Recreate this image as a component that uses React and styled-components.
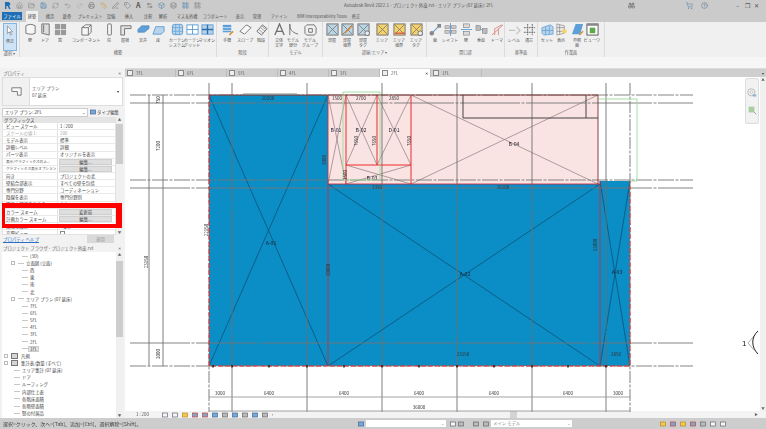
import React from 'react';
import styled, { createGlobalStyle } from 'styled-components';
import {
    Binoculars,
    Box,
    CircleHelp,
    FolderOpen,
    Home,
    Layers,
    LayoutGrid,
    PenLine,
    Printer,
    RefreshCw,
    Redo2,
    Ruler,
    Save,
    Settings2,
    ShoppingCart,
    Tag,
    Undo2,
} from 'lucide-react';

const GlobalStyle = createGlobalStyle`
    html, body {
        margin: 0;
        width: 766px;
        height: 429px;
        overflow: hidden;
        background: #fff;
    }
    #root {
        filter: blur(0.3px);
    }
    * {
        box-sizing: border-box;
    }
`;

const FONT = `"Noto Sans CJK JP", "Noto Sans", sans-serif`;

const Page = styled.div`
    width: 766px;
    height: 429px;
    display: flex;
    flex-direction: column;
    font-family: ${FONT};
    font-size: 4.4px;
    line-height: 1;
    color: #333;
    overflow: hidden;
`;

/* ---------- title bar ---------- */

const TitleBar = styled.div`
    height: 11px;
    flex: none;
    background: #cbcbcb;
    display: flex;
    align-items: center;
    padding-left: 4px;
`;

const QuickIcons = styled.div`
    display: flex;
    align-items: center;
    gap: 5px;
    width: 340px;
    font-size: 7px;
    font-weight: 700;
    color: #555;
`;

const TitleText = styled.div`
    width: 280px;
    font-size: 4.4px;
    color: #555;
    white-space: nowrap;
`;

const WindowIcons = styled.div`
    flex: 1;
    display: flex;
    align-items: center;
    color: #555;
    font-size: 6px;
`;

const WindowIcon = styled.span`
    margin-left: ${p => p.$ml}px;
    display: flex;
`;

const MenuTabs = styled.div`
    height: 11px;
    flex: none;
    background: #cbcbcb;
    display: flex;
    align-items: stretch;
    padding-left: 2px;
`;

const FileTab = styled.div`
    width: 20px;
    background: #1f6fb5;
    color: #fff;
    display: flex;
    align-items: center;
    justify-content: center;
    height: 8px;
    margin-top: 1px;
`;

const MenuTab = styled.div`
    width: 12px;
    flex: none;
    display: flex;
    align-items: center;
    justify-content: center;
    white-space: nowrap;
    margin-left: ${p => p.$ml}px;
    background: ${p => (p.$active ? '#f0f0f0' : 'transparent')};
    color: #555;
    font-size: 4.2px;
`;

/* ---------- ribbon ---------- */

const Ribbon = styled.div`
    height: 35px;
    flex: none;
    background: #f0f0f0;
    display: flex;
`;

const RibbonGroup = styled.div`
    width: ${p => p.$w}px;
    flex: none;
    border-right: 1px solid #dcdcdc;
    display: flex;
    flex-direction: column;
`;

const ToolRow = styled.div`
    flex: 1;
    display: flex;
    padding-top: 1px;
`;

const Tool = styled.div`
    width: 14px;
    flex: none;
    margin-left: ${p => p.$ml}px;
    display: flex;
    flex-direction: column;
    align-items: center;
    gap: 2px;
    white-space: nowrap;
    color: #555;
    font-size: 4.1px;
    line-height: 5.4px;
    text-align: center;
`;

const ActiveTool = styled(Tool)`
    background: #cfe3f6;
    border: 1px solid #84b5e0;
    height: 28px;
    padding-top: 1px;
`;

const GroupLabel = styled.div`
    height: 6px;
    margin-bottom: 1px;
    text-align: center;
    color: #666;
    font-size: 4.2px;
`;

const RibbonStrip = styled.div`
    height: 11px;
    flex: none;
    background: #f6f6f6;
`;

/* ---------- main area ---------- */

const Main = styled.div`
    flex: 1;
    min-height: 0;
    display: flex;
`;

const Sidebar = styled.aside`
    position: relative;
    width: 125px;
    flex: none;
    background: #f2f2f2;
    display: flex;
    flex-direction: column;
    padding: 2px 2px 0;
`;

const PanelHeader = styled.div`
    height: 7px;
    flex: none;
    display: flex;
    align-items: center;
    justify-content: space-between;
    color: #666;
    padding: 0 2px 0 1px;
`;

const TypeBox = styled.div`
    height: 29px;
    flex: none;
    background: #fff;
    border: 1px solid #ddd;
    display: flex;
    align-items: center;
    padding-right: 3px;
`;

const TypeThumb = styled.div`
    width: 27px;
    height: 100%;
    background: #f1f1f1;
    border-right: 1px solid #ddd;
    display: flex;
    align-items: center;
    justify-content: center;
`;

const TypeName = styled.div`
    flex: 1;
    padding-left: 2px;
    line-height: 7px;
    color: #555;
`;

const SelectorRow = styled.div`
    height: 10px;
    flex: none;
    display: flex;
    align-items: center;
    gap: 2px;
    margin-top: 1px;
`;

const SelectorBox = styled.div`
    width: 86px;
    height: 9px;
    background: #fff;
    border: 1px solid #ccc;
    display: flex;
    align-items: center;
    justify-content: space-between;
    padding: 0 2px;
`;

const TypeEdit = styled.div`
    display: flex;
    align-items: center;
    gap: 1px;
    color: #444;
    white-space: nowrap;
`;

const PropArea = styled.div`
    height: 118px;
    flex: none;
    display: flex;
    background: #fff;
    overflow: hidden;
`;

const PropTable = styled.div`
    flex: 1;
    border: 1px solid #e2e2e2;
    border-top: 0;
    overflow: hidden;
`;

const SectionRow = styled.div`
    height: 6px;
    background: #e4e4e4;
    display: flex;
    align-items: center;
    padding-left: 1px;
`;

const PropRow = styled.div`
    height: 7.15px;
    display: grid;
    grid-template-columns: 55px 1fr;
    border-bottom: 1px solid #eaeaea;
`;

const PropName = styled.div`
    padding-left: 3px;
    border-right: 1px solid #e2e2e2;
    white-space: nowrap;
    display: flex;
    align-items: center;
    font-size: ${p => (p.$long ? 3.6 : 4.4)}px;
    color: ${p => (p.$muted ? '#aaa' : '#444')};
`;

const PropValue = styled.div`
    padding-left: 2px;
    white-space: nowrap;
    display: flex;
    align-items: center;
    color: ${p => (p.$muted ? '#aaa' : '#444')};
`;

const PropButton = styled.div`
    margin: 0 1px;
    width: 53px;
    background: #dedede;
    border: 1px solid #cfcfcf;
    display: flex;
    align-items: center;
    justify-content: center;
    color: #444;
`;

const CheckBox = styled.span`
    width: 5px;
    height: 5px;
    background: #fff;
    border: 1px solid #888;
`;

const ScrollV = styled.div`
    width: ${p => p.$w || 7}px;
    flex: none;
    background: #f0f0f0;
    display: flex;
    flex-direction: column;
    align-items: center;
    justify-content: space-between;
    color: #666;
    font-size: 3.5px;
    padding: 1px 0;
`;

const ScrollThumb = styled.div`
    width: 100%;
    height: ${p => p.$h}px;
    margin-top: ${p => p.$top}px;
    margin-bottom: auto;
    background: #cdcdcd;
`;

const HelpRow = styled.div`
    height: 8px;
    flex: none;
    display: flex;
    align-items: center;
    justify-content: space-between;
    padding: 0 9px 0 1px;
`;

const HelpLink = styled.span`
    color: #2a6fc4;
    text-decoration: underline;
`;

const ApplyButton = styled.div`
    width: 27px;
    height: 8px;
    background: #d9d9d9;
    color: #999;
    display: flex;
    align-items: center;
    justify-content: center;
`;

const TreeHeader = styled(PanelHeader)`
    margin-top: 2px;
`;

const TreeArea = styled.div`
    flex: 1;
    min-height: 0;
    display: flex;
    background: #fff;
    overflow: hidden;
`;

const Tree = styled.div`
    flex: 1;
    padding-top: 0.5px;
    overflow: hidden;
`;

const TreeRow = styled.div`
    height: 7.15px;
    display: flex;
    align-items: center;
    gap: 1px;
    padding-left: ${p => p.$indent}px;
    white-space: nowrap;
    color: #444;
`;

const TreeText = styled.span`
    padding: 0 1px;
    background: ${p => (p.$selected ? '#e6e6e6' : 'transparent')};
    outline: ${p => (p.$selected ? '1px solid #ccc' : 'none')};
`;

const TreeLine = styled.span`
    width: 6px;
    height: 1px;
    background: #c8c8c8;
    flex: none;
`;

const Expander = styled.span`
    width: 4px;
    height: 4px;
    border: 1px solid #bbb;
    margin-right: 2px;
    flex: none;
`;

const TreeGlyph = styled.span`
    width: 7px;
    height: 6px;
    background: #d5d5d5;
    border: 1px solid #777;
    margin-right: 1px;
    flex: none;
`;

const RedFrame = styled.div`
    position: absolute;
    left: 2px;
    top: 135px;
    width: 120px;
    height: 25px;
    border: solid #ff0000;
    border-width: 5px 6px 4px 3px;
    pointer-events: none;
`;

const ViewArea = styled.section`
    flex: 1;
    min-width: 0;
    display: flex;
    flex-direction: column;
`;

const ViewTabs = styled.div`
    height: 9px;
    flex: none;
    background: #cfcfcf;
    display: flex;
    border-top: 1px solid #dcdcdc;
`;

const ViewTab = styled.div`
    width: 51px;
    flex: none;
    display: flex;
    align-items: center;
    gap: 3px;
    padding-left: 2px;
    color: #666;
    background: ${p => (p.$active ? '#fff' : 'transparent')};
    border-right: 1px solid #bdbdbd;
    position: relative;
`;

const TabClose = styled.span`
    position: absolute;
    right: 2px;
    color: #333;
`;

const TabSheet = styled.span`
    width: 6px;
    height: 6px;
    border: 1px solid #888;
    background: #eee;
`;

const TabMenu = styled.span`
    margin-left: auto;
    margin-right: 2px;
    align-self: center;
    color: #444;
    font-size: 4px;
`;

const CanvasRow = styled.div`
    flex: 1;
    min-height: 0;
    display: flex;
`;

const Canvas = styled.div`
    position: relative;
    flex: 1;
    background: #fff;
`;

const PlanSvg = styled.svg`
    display: block;
    width: 635px;
    height: 335px;
`;

const NavWheel = styled.div`
    position: absolute;
    top: 1px;
    right: 1px;
    width: 14px;
    height: 46px;
    background: #f2f2f2;
    border: 1px solid #ddd;
    border-radius: 2px;
    display: flex;
    flex-direction: column;
    align-items: center;
    justify-content: center;
    gap: 8px;
`;

const ViewBar = styled.div`
    height: 7px;
    flex: none;
    display: flex;
    align-items: center;
    background: #f3f3f3;
`;

const ScaleText = styled.span`
    margin-left: 11px;
    width: 26px;
    color: #555;
`;

const BarIcons = styled.div`
    display: flex;
    align-items: center;
    gap: 4px;
    width: 119px;
`;

const HScroll = styled.div`
    flex: 1;
    height: 100%;
    display: flex;
    align-items: center;
    padding-left: 229px;
`;

const HThumb = styled.span`
    width: 7px;
    height: 100%;
    background: #d3d3d3;
`;

const HArrow = styled.span`
    margin-left: auto;
    margin-right: 8px;
    color: #666;
    font-size: 3.5px;
`;

/* ---------- status bar ---------- */

const StatusBar = styled.footer`
    height: 11px;
    flex: none;
    background: #cdcdcd;
    display: flex;
    align-items: center;
    color: #444;
`;

const StatusText = styled.div`
    width: 358px;
    padding-left: 3px;
    white-space: nowrap;
    font-size: 5px;
`;

const StatusInput = styled.div`
    width: ${p => p.$w}px;
    height: 7px;
    background: #fff;
    margin-left: ${p => p.$ml}px;
    color: #888;
    display: flex;
    align-items: center;
    justify-content: space-between;
    padding: 0 2px;
    flex: none;
`;

const StatusIcons = styled.div`
    display: flex;
    align-items: center;
    gap: ${p => p.$gap}px;
    margin-left: ${p => p.$ml}px;
`;

/* ---------- little drawings ---------- */

const Ico = styled.svg`
    display: block;
    flex: none;
    width: ${p => p.$s || 13}px;
    height: ${p => p.$s || 13}px;
`;

const G = '#707070';
const B = '#5d9fd6';
const L = '#b9d3ea';
const Y = '#f4d26b';

const roomIcon = (fill, extra) => (
    <>
        <rect x="1" y="1" width="12" height="12" fill={fill} stroke={G} />
        <path d="M2 2l10 10M12 2L2 12" stroke={G} strokeWidth=".8" />
        {extra}
    </>
);

const ICONS = {
    arrow: <path d="M4 1v9l2-2 2 4 1-1-2-3h3z" fill="#fff" stroke={G} strokeWidth=".7" />,
    wall: <path d="M2 3c3-2 7-2 10 0v8c-3 2-7 1-10 0z" fill="#f6f6f6" stroke={G} />,
    door: <path d="M3 1h8v12l-8-2zM5 2v8" fill="#ddd" stroke={G} />,
    window: (
        <>
            <rect x="1" y="1" width="12" height="12" fill="#999" />
            <path d="M7 1v12M1 7h12" stroke="#ddd" />
        </>
    ),
    component: <path d="M2 5l4-3h6v8l-3 3H2zM2 5h7v8M9 5l3-3" fill="#f6f6f6" stroke={G} />,
    column: <rect x="5" y="1" width="4" height="12" rx="1" fill="#f6f6f6" stroke={G} />,
    roof: <path d="M2 13V3h11v3H6v7z" fill="#e4e4e4" stroke={G} />,
    ceiling: <path d="M1 7l4-4h8v3l-5 4H1z" fill={B} stroke="#3d7cb0" strokeWidth=".6" />,
    floor: <path d="M1 12l3-8h9v5l-3 3z" fill={L} stroke={B} />,
    curtain: (
        <>
            <rect x="1.5" y="1.5" width="11" height="11" rx="2" fill={L} stroke={B} />
            <path d="M5 1v12M9 1v12M1 5h12M1 9h12" stroke={B} strokeWidth=".7" />
        </>
    ),
    grid: (
        <>
            <rect x="1" y="2" width="12" height="10" fill="#fff" stroke={B} />
            <path d="M7 2v10M1 7h12" stroke={B} />
        </>
    ),
    mullion: (
        <>
            <rect x="1" y="2" width="12" height="10" fill={L} stroke={B} />
            <path d="M7 2v10M1 7h12" stroke="#2f6fa8" strokeWidth="1.5" />
        </>
    ),
    railing: (
        <>
            <rect x="2" y="2" width="9" height="8" fill={B} />
            <path d="M2 5h9M2 8h9" stroke="#fff" strokeWidth=".7" />
            <path d="M9 13l4-4" stroke="#d8902e" strokeWidth="1.6" />
        </>
    ),
    ramp: <path d="M1 9l7-7 5 3-7 7z" fill="#fafafa" stroke={G} />,
    stair: (
        <>
            <path d="M2 9l6-7 5 4-6 7z" fill="#eee" stroke={G} />
            <path d="M4 7l5 4M6 5l5 4M7 3l5 4" stroke={G} strokeWidth=".6" />
        </>
    ),
    text3d: <path d="M2 13L7 1l5 12M4 9h6" fill="none" stroke={G} strokeWidth="1.4" />,
    line: <path d="M3 1c0 6 2 9 9 11M3 1v12" fill="none" stroke={G} />,
    group: <path d="M3 2h8l2 3v6l-2 2H3l-2-2V4zM5 6h4v4H5z" fill="none" stroke={G} />,
    room: roomIcon('#bcd5e4'),
    roomBound: roomIcon('#bcd5e4', <path d="M4 11l8-8" stroke="#e08a2e" strokeWidth="1.4" />),
    roomTag: roomIcon('#bcd5e4', <circle cx="11" cy="11" r="2.5" fill="#eee" stroke={G} />),
    area: roomIcon(Y),
    areaBound: roomIcon(Y, <path d="M2 11h11" stroke="#d8564b" strokeWidth="1.4" />),
    areaTag: roomIcon(Y, <circle cx="11" cy="11" r="2.5" fill="#eee" stroke={G} />),
    face: (
        <>
            <path d="M2 12l9-9" stroke={B} strokeWidth="1.2" />
            <circle cx="3" cy="11" r="2.4" fill="#888" />
            <rect x="9" y="1" width="4" height="4" fill="#888" />
        </>
    ),
    shaft: (
        <>
            <path d="M7 0v14" stroke={B} />
            <rect x="1" y="3" width="5" height="3" fill="#ccc" stroke={G} strokeWidth=".5" />
            <rect x="8" y="3" width="5" height="3" fill="#ccc" stroke={G} strokeWidth=".5" />
            <rect x="1" y="8" width="5" height="3" fill="#ccc" stroke={G} strokeWidth=".5" />
            <rect x="8" y="8" width="5" height="3" fill="#ccc" stroke={G} strokeWidth=".5" />
        </>
    ),
    wallOpen: (
        <>
            <path d="M1 7h12" stroke={B} />
            <rect x="4" y="1" width="6" height="4" fill="#ddd" stroke={G} strokeWidth=".6" />
            <rect x="4" y="9" width="6" height="4" fill="#ddd" stroke={G} strokeWidth=".6" />
        </>
    ),
    vertical: (
        <>
            <path d="M2 2l10 10" stroke={B} />
            <rect x="1" y="3" width="5" height="5" fill="#bbb" stroke={G} strokeWidth=".5" />
            <rect x="8" y="6" width="5" height="5" fill="#bbb" stroke={G} strokeWidth=".5" />
        </>
    ),
    dormer: <path d="M1 13L13 2M4 13V6l8-4M8 13V6" fill="none" stroke="#d98a80" />,
    level: <path d="M1 8h7M9 4l4 4-4 4" fill="none" stroke="#c4c4c4" strokeWidth="1.3" />,
    axes: <path d="M1 5h12M1 10h12M5 1v12M10 1v12" stroke="#666" strokeDasharray="2 .7" />,
    set: <path d="M1 5l9-3 3 2v8l-10 1-2-2z M5 4v9M9 3v9M1 8h12" fill={L} stroke={B} strokeWidth=".8" />,
    show: (
        <>
            <path d="M2 1l8 2v8l-8 2zM5 2v10M2 5h8M2 9h8" fill="#eee" stroke={G} strokeWidth=".6" />
            <circle cx="10" cy="9" r="2.5" fill={Y} />
        </>
    ),
    plane: (
        <>
            <path d="M5 1h8l-3 11H1z" fill={B} />
            <path d="M9 13l4-4" stroke="#d8902e" strokeWidth="1.5" />
        </>
    ),
    viewer: (
        <>
            <rect x="1" y="1" width="12" height="12" fill="#fff" stroke="#555" />
            <rect x="1" y="1" width="12" height="2" fill="#888" />
            <rect x="4" y="5" width="6" height="6" fill="#5ea84a" />
        </>
    ),
};

const makeIcon = (name, s) => (
    <Ico $s={s} viewBox="0 0 14 14">
        {ICONS[name]}
    </Ico>
);

const SmallIcon = ({ kind }) => {
    const colors = {
        box: ['#f5f5f5', '#667'],
        blue: ['#78a8d6', '#3d6b98'],
        red: ['#7ba6cf', '#c9423c'],
        yellow: ['#f1c84d', '#b78a25'],
        green: ['#9bc48a', '#5f8d4f'],
        gray: ['#bbb', '#666'],
    };
    const [fill, stroke] = colors[kind];
    return (
        <Ico $s={6} viewBox="0 0 6 6">
            <rect x=".5" y="1" width="5" height="4" fill={fill} stroke={stroke} strokeWidth=".7" />
        </Ico>
    );
};

/* ---------- data ---------- */

const QUICK_LEFT = [
    [Home, '#777'], [FolderOpen, '#777'], [Save, '#2f6fa8'], [RefreshCw, '#888'], [Undo2, '#888'],
    [Redo2, '#aaa'], [Printer, '#666'], [Ruler, '#c99a2e'], [PenLine, '#666'], [Tag, '#666'],
];
const QUICK_RIGHT = [
    [Settings2, '#666'], [Box, '#3d7cb0'], [Layers, '#666'], [LayoutGrid, '#3d7cb0'], [LayoutGrid, '#777'],
];

const MENU = [
    ['建築', 32, true], ['構造', 50], ['鉄骨', 67], ['プレキャスト', 90], ['設備', 111], ['挿入', 129],
    ['注釈', 148], ['解析', 163], ['マス＆外構', 187], ['コラボレート', 215], ['表示', 240], ['管理', 257],
    ['アドイン', 279], ['BIM Interoperability Tools', 322], ['修正', 356],
];

const GROUPS = [
    { label: '構築', start: 20, end: 217, tools: [
        ['wall', '壁', 30], ['door', 'ドア', 45], ['window', '窓', 60], ['component', 'コンポーネント', 86],
        ['column', '柱', 109], ['roof', '屋根', 125], ['ceiling', '天井', 143], ['floor', '床', 158],
        ['curtain', ['カーテン', 'システム'], 177], ['grid', ['カーテン', 'グリッド'], 192], ['mullion', 'マリオン', 207],
    ] },
    { label: '階段', start: 217, end: 269, tools: [
        ['railing', '手摺', 227], ['ramp', 'スロープ', 245], ['stair', '階段', 261],
    ] },
    { label: 'モデル', start: 269, end: 323, tools: [
        ['text3d', ['立体', '文字'], 279], ['line', ['モデル', '線分'], 293], ['group', ['モデル', 'グループ'], 310],
    ] },
    { label: '部屋/エリア ▾', start: 323, end: 427, tools: [
        ['room', '部屋', 332], ['roomBound', ['部屋', '境界'], 347], ['roomTag', ['部屋', 'タグ'], 363],
        ['area', 'エリア', 382], ['areaBound', ['エリア', '境界'], 399], ['areaTag', ['エリア', 'タグ'], 416],
    ] },
    { label: '開口部', start: 427, end: 505, tools: [
        ['face', '面', 435], ['shaft', 'シャフト', 450], ['wallOpen', '壁', 466], ['vertical', '垂直', 481], ['dormer', 'ドーマ', 497],
    ] },
    { label: '基準面', start: 505, end: 538, tools: [
        ['level', 'レベル', 514], ['axes', '通芯', 529],
    ] },
    { label: '作業面', start: 538, end: 605, tools: [
        ['set', 'セット', 547], ['show', '表示', 561], ['plane', ['参照', '面'], 577], ['viewer', 'ビューワ', 592],
    ] },
];

const PROPS = [
    ['ビュー スケール', '1 : 200'],
    ['スケールの値 1:', '200', 'muted'],
    ['モデル表示', '標準'],
    ['詳細レベル', '詳細'],
    ['パーツ表示', 'オリジナルを表示'],
    ['表示/グラフィックスの上...', '編集...', 'button'],
    ['グラフィックス表示オプション', '編集...', 'button'],
    ['向き', 'プロジェクトの北'],
    ['壁結合部表示', 'すべての壁を包括'],
    ['専門分野', 'コーディネーション'],
    ['隠線を表示', '専門分野別'],
    ['既定の解析表示スタイル', 'なし'],
    ['カラー スキーム', '変更前', 'button'],
    ['計画カラー スキーム', '編集...', 'button'],
    ['太陽の設定', '<なし>'],
    ['文脈ビュー', '', 'check'],
];

const TREE = [
    { text: '(3D)', indent: 20, line: true },
    { text: '立面図 (立面)', indent: 9, exp: true },
    { text: '西', indent: 20, line: true },
    { text: '東', indent: 20, line: true },
    { text: '南', indent: 20, line: true },
    { text: '北', indent: 20, line: true },
    { text: 'エリア プラン (07 延床)', indent: 9, exp: true },
    { text: '7FL', indent: 20, line: true },
    { text: '6FL', indent: 20, line: true },
    { text: '5FL', indent: 20, line: true },
    { text: '4FL', indent: 20, line: true },
    { text: '3FL', indent: 20, line: true },
    { text: '2FL', indent: 20, line: true },
    { text: '1FL', indent: 20, line: true, selected: true },
    { text: '凡例', indent: 2, exp: true, glyph: true },
    { text: '集計表/数量 (すべて)', indent: 2, exp: true, glyph: true },
    { text: 'エリア集計 (07 延床)', indent: 12, line: true },
    { text: 'ドア', indent: 12, line: true },
    { text: 'ルーフィング', indent: 12, line: true },
    { text: '内部仕上表', indent: 12, line: true },
    { text: '各階床面積', indent: 12, line: true },
    { text: '各階壁面積', indent: 12, line: true },
    { text: '竪の付属品', indent: 12, line: true },
];

const VIEW_TABS = ['7FL', '6FL', '5FL', '4FL', '3FL', '2FL', '1FL'];

/* grid columns and levels of the plan, in page pixels */
const GRID_X = [232, 307, 382, 457, 532, 606];
const TICK_X = [213, 232, 269, 307, 344, 382, 419, 457, 494, 532, 568, 606];
const LEFT_X = 209;
const RIGHT_X = 630;

const PLAN_AREAS = [
    { x: 209, y: 95, w: 119, h: 271, fill: '#0b8dc6', label: 'A-01', lx: 271, ly: 245 },
    { x: 328, y: 184, w: 272, h: 182, fill: '#0b8dc6', label: 'A-02', lx: 465, ly: 276 },
    { x: 600, y: 181, w: 30, h: 185, fill: '#0b8dc6', label: 'A-03', lx: 617, ly: 274 },
    { x: 328, y: 95, w: 18, h: 89, fill: '#fae3e3', label: 'B-01', lx: 336, ly: 132 },
    { x: 346, y: 95, w: 31, h: 70, fill: '#fae3e3', label: 'B-02', lx: 361, ly: 132 },
    { x: 377, y: 95, w: 34, h: 70, fill: '#fae3e3', label: 'D-01', lx: 394, ly: 132 },
    { x: 346, y: 165, w: 65, h: 19, fill: '#fae3e3', label: 'B-03', lx: 372, ly: 180 },
    { x: 411, y: 95, w: 187, h: 89, fill: '#fae3e3', label: 'B-04', lx: 514, ly: 146 },
];

const DIMS = [
    ['10200', 268, 100], ['1500', 337, 100], ['2700', 361, 100], ['2850', 394, 100],
    ['3350', 377, 189], ['16100', 503, 189], ['23150', 463, 356], ['2850', 616, 356],
    ['3000', 220, 395], ['6400', 269, 395], ['6400', 344, 395], ['6400', 419, 395],
    ['6400', 494, 395], ['6400', 568, 395], ['3000', 618, 395], ['36000', 419, 409],
];

const V_DIMS = [
    ['750', 160, 100], ['7200', 160, 146], ['23150', 148, 262], ['3000', 160, 354],
    ['22150', 208, 230], ['3000', 326, 160], ['20000', 330, 270], ['13000', 597, 245],
    ['7650', 358, 141], ['7650', 376, 141], ['7650', 411, 141], ['1500', 347, 175],
];

const Plan = () => (
    <PlanSvg viewBox="125 77 635 335">
        {PLAN_AREAS.map(a => (
            <g key={a.label}>
                <rect x={a.x} y={a.y} width={a.w} height={a.h} fill={a.fill} />
                <path
                    d={`M${a.x} ${a.y}L${a.x + a.w} ${a.y + a.h}M${a.x + a.w} ${a.y}L${a.x} ${a.y + a.h}`}
                    stroke={a.fill === '#0b8dc6' ? '#0d4a6b' : '#8a7c7c'}
                    strokeWidth=".7"
                />
                <text x={a.lx} y={a.ly} fontSize="5.2" textAnchor="middle" fill="#223" fontFamily={FONT}>
                    {a.label}
                </text>
            </g>
        ))}

        {/* levels */}
        <g stroke="#777" strokeWidth=".9" fill="none">
            <path d="M130 95H693M130 366H693" strokeDasharray="16 1.5 3 1.5" />
            <path d="M130 103H693M130 188H693M130 343H693" strokeDasharray="60 1.5 3 1.5" />
            <path d="M130 180H693" strokeDasharray="16 1.5 3 1.5" />
        </g>

        {/* grids */}
        <g stroke="#707070" strokeWidth=".9" fill="none">
            {GRID_X.map(x => (
                <path key={x} d={`M${x} 83V412`} strokeDasharray="120 1.5 3 1.5" />
            ))}
            <path d={`M${LEFT_X} 83V412M${RIGHT_X} 83V412`} strokeDasharray="12 1.5 3 1.5" />
            <path d="M149 95V366M163 95V366" />
            <path d={`M${LEFT_X} 397H${RIGHT_X}M${LEFT_X} 411H${RIGHT_X}`} stroke="#999" />
        </g>

        {/* outlines */}
        <g fill="none" stroke="#ef2b2b">
            <path d="M346 95V184M377 95V165M411 95V184M346 165H411" strokeWidth="1" />
            <path d="M328 95V366M600 181V366M328 184H600" strokeWidth=".9" stroke="#c92c3b" />
            <path d="M209 95V366H630V181" strokeWidth="1" strokeDasharray="5 2" />
            <path d="M209 95H598V184" strokeWidth=".9" stroke="#7b3030" />
        </g>
        <path d="M463 95V118H598M586 95V118" fill="none" stroke="#444" strokeWidth="1" />
        <rect x="243" y="93.5" width="54" height="1.5" fill="#8b8b8b" />
        {TICK_X.map(x => (
            <rect key={x} x={x - 0.75} y="365" width="1.5" height="2.5" fill="#222" />
        ))}

        {/* scope boxes */}
        <path d="M343 180V92H380V180ZM599 99H637V181H630" fill="none" stroke="#9cd99a" strokeWidth=".9" />

        <g fontSize="4.5" fill="#333" fontFamily={FONT} textAnchor="middle">
            {DIMS.map(([t, x, y]) => (
                <text key={`${t}${x}${y}`} x={x} y={y}>
                    {t}
                </text>
            ))}
            {V_DIMS.map(([t, x, y]) => (
                <text key={`${t}${x}${y}`} x={x} y={y} transform={`rotate(-90 ${x} ${y})`}>
                    {t}
                </text>
            ))}
        </g>

        {/* elevation marker */}
        <text x="742" y="346" fontSize="8" fill="#222" fontFamily="Liberation Sans, sans-serif">
            1
        </text>
        <path d="M754 336L748 343L754 350" fill="none" stroke="#aaa" />
        <path d="M758 331C751 337 751 347 758 354" fill="none" stroke="#222" />
    </PlanSvg>
);

const ToolList = ({ group }) => {
    let prev = group.start;
    return (
        <ToolRow>
            {group.tools.map(([icon, label, x]) => {
                const ml = x - 7 - prev;
                prev = x + 7;
                const lines = Array.isArray(label) ? label : [label];
                return (
                    <Tool key={`${icon}${x}`} $ml={ml}>
                        {makeIcon(icon)}
                        <span>
                            {lines.map(l => (
                                <div key={l}>{l}</div>
                            ))}
                        </span>
                    </Tool>
                );
            })}
        </ToolRow>
    );
};

const MenuList = () => {
    let prev = 22;
    return MENU.map(([label, x, active]) => {
        const ml = x - 6 - prev;
        prev = x + 6;
        return (
            <MenuTab key={label} $ml={ml} $active={active}>
                {label}
            </MenuTab>
        );
    });
};

const QuickList = ({ items }) =>
    items.map(([Icon, color], i) => <Icon key={i} size={7} color={color} strokeWidth={1.6} />);

const App = () => (
    <Page>
        <GlobalStyle />
        <TitleBar>
            <QuickIcons>
                <Ico $s={7} viewBox="0 0 7 7">
                    <path d="M1 0h3.5a2 2 0 0 1 .6 3.8L6.6 7H5L3.6 4H2.4v3H1z" fill="#1f6fb5" />
                </Ico>
                <QuickList items={QUICK_LEFT} />
                <span>A</span>
                <QuickList items={QUICK_RIGHT} />
            </QuickIcons>
            <TitleText>Autodesk Revit 2022.1 - プロジェクト外皮.rvt - エリア プラン (07 延床): 2FL</TitleText>
            <WindowIcons>
                <WindowIcon $ml={4}>
                    <Binoculars size={7} color="#555" strokeWidth={1.6} />
                </WindowIcon>
                <WindowIcon $ml={51}>
                    <ShoppingCart size={7} color="#4a7ba6" strokeWidth={1.6} />
                </WindowIcon>
                <WindowIcon $ml={8}>
                    <CircleHelp size={7} color="#4a6f96" strokeWidth={1.6} />
                </WindowIcon>
                <WindowIcon $ml={28}>–</WindowIcon>
                <WindowIcon $ml={6}>❐</WindowIcon>
                <WindowIcon $ml={4}>✕</WindowIcon>
            </WindowIcons>
        </TitleBar>

        <MenuTabs>
            <FileTab>ファイル</FileTab>
            <MenuList />
        </MenuTabs>

        <Ribbon>
            <RibbonGroup $w={20}>
                <ToolRow>
                    <ActiveTool $ml={3}>
                        {makeIcon('arrow', 12)}
                        <span>修正</span>
                    </ActiveTool>
                </ToolRow>
                <GroupLabel>選択 ▾</GroupLabel>
            </RibbonGroup>
            {GROUPS.map(group => (
                <RibbonGroup key={group.label} $w={group.end - group.start}>
                    <ToolList group={group} />
                    <GroupLabel>{group.label}</GroupLabel>
                </RibbonGroup>
            ))}
        </Ribbon>
        <RibbonStrip />

        <Main>
            <Sidebar>
                <PanelHeader>
                    <span>プロパティ</span>
                    <span>✕</span>
                </PanelHeader>
                <TypeBox>
                    <TypeThumb>
                        <Ico $s={13} viewBox="0 0 14 14">
                            <path d="M2 3h10v8H8V7H2z" fill="#f7f7f7" stroke="#777" />
                        </Ico>
                    </TypeThumb>
                    <TypeName>
                        エリア プラン
                        <br />
                        07 延床
                    </TypeName>
                    <span>▾</span>
                </TypeBox>
                <SelectorRow>
                    <SelectorBox>
                        <span>エリア プラン: 2FL</span>
                        <span>⌄</span>
                    </SelectorBox>
                    <TypeEdit>
                        <SmallIcon kind="blue" />
                        タイプ編集
                    </TypeEdit>
                </SelectorRow>
                <PropArea>
                    <PropTable>
                        <SectionRow>グラフィックス</SectionRow>
                        {PROPS.map(([name, value, kind]) => (
                            <PropRow key={name}>
                                <PropName $muted={kind === 'muted'} $long={name.length > 11}>
                                    {name}
                                </PropName>
                                {kind === 'button' ? (
                                    <PropButton>{value}</PropButton>
                                ) : (
                                    <PropValue $muted={kind === 'muted'}>
                                        {kind === 'check' ? <CheckBox /> : value}
                                    </PropValue>
                                )}
                            </PropRow>
                        ))}
                    </PropTable>
                    <ScrollV>
                        <span>▲</span>
                        <ScrollThumb $top={2} $h={40} />
                        <span>▼</span>
                    </ScrollV>
                </PropArea>
                <HelpRow>
                    <HelpLink>プロパティ ヘルプ</HelpLink>
                    <ApplyButton>適用</ApplyButton>
                </HelpRow>
                <TreeHeader>
                    <span>プロジェクト ブラウザ - プロジェクト外皮.rvt</span>
                    <span>✕</span>
                </TreeHeader>
                <TreeArea>
                    <Tree>
                        {TREE.map((row, i) => (
                            <TreeRow key={i} $indent={row.indent}>
                                {row.line && <TreeLine />}
                                {row.exp && <Expander />}
                                {row.glyph && <TreeGlyph />}
                                {row.exp && !row.glyph && <TreeLine />}
                                <TreeText $selected={row.selected}>{row.text}</TreeText>
                            </TreeRow>
                        ))}
                    </Tree>
                    <ScrollV>
                        <span>▲</span>
                        <ScrollThumb $top={4} $h={76} />
                        <span>▼</span>
                    </ScrollV>
                </TreeArea>
                <RedFrame />
            </Sidebar>

            <ViewArea>
                <ViewTabs>
                    {VIEW_TABS.map(t => (
                        <ViewTab key={t} $active={t === '2FL'}>
                            <TabSheet />
                            {t}
                            {t === '2FL' && <TabClose>✕</TabClose>}
                        </ViewTab>
                    ))}
                    <TabMenu>▾</TabMenu>
                </ViewTabs>
                <CanvasRow>
                    <Canvas>
                        <Plan />
                        <NavWheel>
                            <Ico $s={10} viewBox="0 0 14 14">
                                <circle cx="6" cy="6" r="5" fill="none" stroke="#bbb" strokeWidth="1.4" />
                                <circle cx="6" cy="6" r="2" fill="none" stroke="#bbb" />
                                <rect x="8" y="9" width="5" height="3" fill="#8fb4d8" />
                            </Ico>
                            <Ico $s={9} viewBox="0 0 14 14">
                                <rect x="1" y="1" width="9" height="9" fill="#a9cfa0" />
                                <path d="M9 9l4 4" stroke="#777" />
                            </Ico>
                        </NavWheel>
                    </Canvas>
                    <ScrollV $w={6}>
                        <span>▲</span>
                        <span>▼</span>
                    </ScrollV>
                </CanvasRow>
                <ViewBar>
                    <ScaleText>1 : 200</ScaleText>
                    <BarIcons>
                        {['box', 'box', 'yellow', 'red', 'red', 'blue', 'gray', 'blue', 'gray', 'blue', 'gray'].map((k, i) => (
                            <SmallIcon key={i} kind={k} />
                        ))}
                        <span>‹</span>
                    </BarIcons>
                    <HScroll>
                        <HThumb />
                        <HArrow>▶</HArrow>
                    </HScroll>
                </ViewBar>
            </ViewArea>
        </Main>

        <StatusBar>
            <StatusText>選択=クリック、次へ=[Tab]、追加=[Ctrl]、選択解除=[Shift]。</StatusText>
            <SmallIcon kind="blue" />
            <StatusInput $w={80} $ml={2}>
                <span />
                <span>⌄</span>
            </StatusInput>
            <StatusIcons $ml={4} $gap={2}>
                <SmallIcon kind="box" />
                <SmallIcon kind="gray" />
            </StatusIcons>
            <StatusIcons $ml={9} $gap={4}>
                <SmallIcon kind="gray" />
                <SmallIcon kind="gray" />
            </StatusIcons>
            <StatusInput $w={81} $ml={2}>
                <span>メイン モデル</span>
                <span>⌄</span>
            </StatusInput>
            <StatusIcons $ml={88} $gap={4}>
                <SmallIcon kind="yellow" />
                <SmallIcon kind="red" />
                <SmallIcon kind="yellow" />
                <SmallIcon kind="red" />
                <SmallIcon kind="gray" />
                <SmallIcon kind="box" />
                <SmallIcon kind="box" />
            </StatusIcons>
        </StatusBar>
    </Page>
);

export default App;
